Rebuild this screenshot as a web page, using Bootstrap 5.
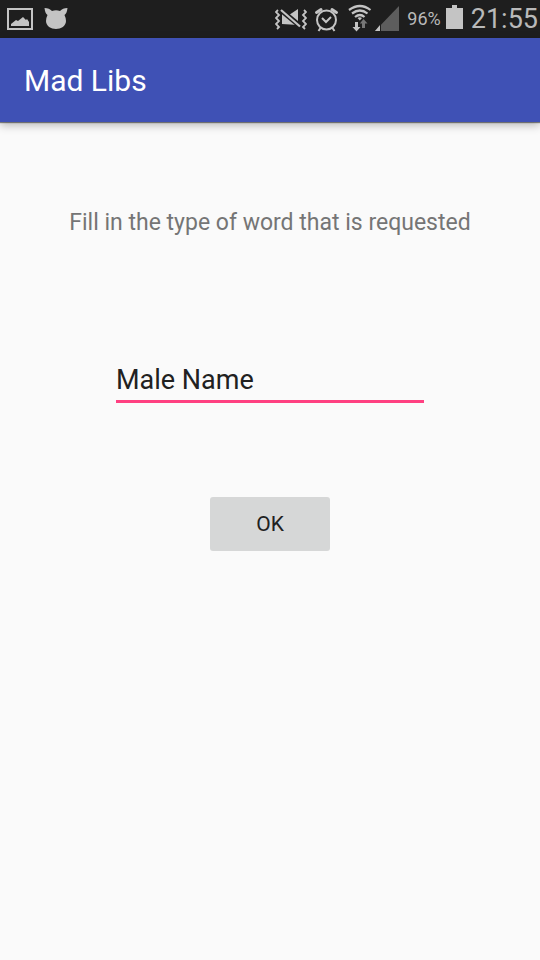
<!DOCTYPE html>
<html lang="en">
<head>
<meta charset="utf-8">
<meta name="viewport" content="width=device-width, initial-scale=1">
<title>Mad Libs</title>
<link href="https://cdn.jsdelivr.net/npm/bootstrap@5.3.0/dist/css/bootstrap.min.css" rel="stylesheet">
<style>
body { font-family: Roboto, "Noto Sans", sans-serif; background: #fafafa; color: #212121; }
.status-bar { background: #1e1e1e; color: #b9b9b9; height: 38px; line-height: 38px; padding: 0 2px 0 7px; }
.status-bar svg { display: block; flex: none; }
.status-icons { gap: 8px; }
.group-alerts { gap: 7px; }
.group-network { gap: 3px; }
.group-power { gap: 5px; }
.status-pct { font-size: 18px; line-height: 40px; }
.status-clock { font-size: 27px; }
.app-bar { background: #3f51b5; padding: 21px 24px 19px; box-shadow: 0 1px 1px rgba(0,0,0,.45), 0 3px 9px rgba(0,0,0,.28); }
.app-title { font-size: 30px; line-height: 44px; font-weight: 400; color: #fff; }
.screen { padding: 85px 24px 24px; }
.prompt { font-size: 23px; line-height: 32px; color: #757575; margin-bottom: 125px; }
.word-form { gap: 94px; }
.word-input { width: 308px; max-width: 100%; font-size: 27px; line-height: 32px; padding: 0 0 4px; color: #212121; border: 0; border-bottom: 3px solid #ff4081; border-radius: 0; background: transparent; }
.word-input:focus { color: #212121; background: transparent; border-color: #ff4081; box-shadow: none; }
.ok-btn { min-width: 120px; font-size: 21px; line-height: 32px; padding: 11px 16px; border: 0; border-radius: 3px; background: #d6d7d7; color: #212121; }
</style>
<script src="https://cdn.jsdelivr.net/npm/bootstrap@5.3.0/dist/js/bootstrap.bundle.min.js"></script>
</head>
<body>
<div class="status-bar d-flex align-items-center justify-content-between">
  <div class="d-flex align-items-center gap-2">
    <svg width="26" height="38" viewBox="0 0 26 38" fill="#c4c4c4" aria-hidden="true">
      <rect x="1" y="9" width="24" height="20" fill="none" stroke="#c4c4c4" stroke-width="2"/>
      <path d="M4 26V24L9 20L11 21L16 17L19 20L20 19L22 22V26Z"/>
    </svg>
    <svg width="30" height="38" viewBox="41 0 30 38" fill="#c4c4c4" aria-hidden="true">
      <path d="M44.500 8C48 8 50 9 52 11Q56 9.500 60 11C62 9 64 8 67.500 8C67 12 66 14 64.500 15Q66 18 66 21C66 26 61 29 56 29S46 26 46 21Q46 18 47.500 15C46 14 45 12 44.500 8Z"/>
    </svg>
  </div>
  <div class="status-icons d-flex align-items-center">
    <div class="group-alerts d-flex">
      <svg width="32" height="38" viewBox="274 0 32 38" fill="#c4c4c4" aria-hidden="true">
        <path d="M281 14H287L297 24V25L281 24ZM288 15L297 9V22Z"/>
        <path d="M281 11L299 26" stroke="#1e1e1e" stroke-width="5"/>
        <path d="M281 16L288 21L281 24Z"/>
        <path d="M280 10L299 26.500" stroke="#c4c4c4" stroke-width="2.200"/>
        <path d="M277 10L275 12L278 15L275 18L278 21L275 24L278 27L276 29M303 10L305 12L302 15L305 18L302 21L305 24L302 27L304 29" fill="none" stroke="#c4c4c4" stroke-width="1.800"/>
      </svg>
      <svg width="26" height="38" viewBox="313 0 26 38" fill="none" stroke="#c4c4c4" stroke-width="2" aria-hidden="true">
        <circle cx="325.500" cy="20" r="9.500"/>
        <path d="M321 18L325 22L330 17M319.500 28L317.500 31M331.500 28L333.500 31"/>
        <path d="M315.500 12.500L320 9.500M335.500 12.500L331 9.500" stroke-width="3" stroke-linecap="round"/>
      </svg>
    </div>
    <div class="group-network d-flex">
      <svg width="24" height="38" viewBox="348 0 24 38" fill="none" stroke="#c4c4c4" aria-hidden="true">
        <path d="M349 10Q360 2 370.500 10M352 13.500Q360 7.500 367.500 13.500M355 17Q360 13 364.500 17" stroke-width="2.200"/>
        <path d="M357.500 18Q359.800 16.500 362 18L359.800 20.500Z" fill="#c4c4c4" stroke="none"/>
        <path d="M355 22H358V27H360.500L356.500 31.500L352.500 27H355Z" fill="#c4c4c4" stroke="none"/>
        <path d="M362 28H365V23.500H367.500L363.500 19L359.800 23.500H362Z" fill="#777" stroke="none"/>
      </svg>
      <svg width="24" height="38" viewBox="375 0 24 38" aria-hidden="true">
        <path d="M399 6V31H375Z" fill="#5d5d5d"/>
        <path d="M380 25V31H375Z" fill="#c4c4c4"/>
        <path d="M380.500 24V31" stroke="#1e1e1e"/>
      </svg>
    </div>
    <div class="group-power d-flex">
      <span class="status-pct">96%</span>
      <svg width="17" height="38" viewBox="446 0 17 38" fill="#c4c4c4" aria-hidden="true"><path d="M446 9H452V6H457V9H463V30H446Z"/></svg>
    </div>
    <span class="status-clock">21:55</span>
  </div>
</div>
<header class="app-bar"><h1 class="app-title m-0">Mad Libs</h1></header>
<main class="screen">
  <label class="prompt d-block text-center" for="word">Fill in the type of word that is requested</label>
  <form class="word-form d-flex flex-column align-items-center" onsubmit="return false">
    <input class="word-input form-control" id="word" type="text" value="Male Name" autocomplete="off">
    <button class="ok-btn btn" type="submit">OK</button>
  </form>
</main>
</body>
</html>
